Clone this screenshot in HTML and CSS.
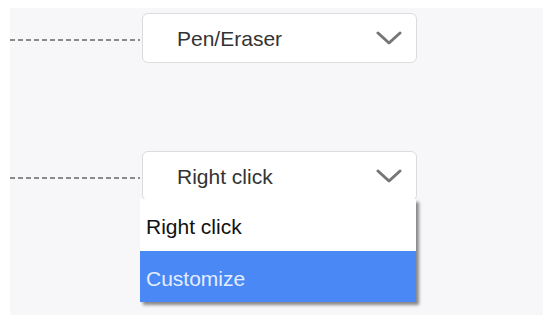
FILE: index.html
```html
<!DOCTYPE html>
<html lang="en">
<head>
    <meta charset="UTF-8">
    <meta name="viewport" content="width=device-width, initial-scale=1.0">
    <title>Button settings</title>
    <link rel="stylesheet" href="styles.css">
</head>
<body>
    <div class="panel">
        <div class="row">
            <div class="dash"></div>
            <div class="select">
                <span class="value">Pen/Eraser</span>
                <svg class="chevron" width="26" height="14" viewBox="0 0 26 14">
                    <polyline points="2,2 13,12 24,2" fill="none" stroke="#767676" stroke-width="3" stroke-linecap="round" stroke-linejoin="round"/>
                </svg>
            </div>
        </div>
        <div class="row">
            <div class="dash"></div>
            <div class="select open">
                <span class="value">Right click</span>
                <svg class="chevron" width="26" height="14" viewBox="0 0 26 14">
                    <polyline points="2,2 13,12 24,2" fill="none" stroke="#767676" stroke-width="3" stroke-linecap="round" stroke-linejoin="round"/>
                </svg>
                <ul class="menu">
                    <li class="item">Right click</li>
                    <li class="item active">Customize</li>
                </ul>
            </div>
        </div>
    </div>
</body>
</html>
```

FILE: styles.css
```css
body {
    margin: 0;
    background-color: #ffffff;
    font-family: "Liberation Sans", Arial, sans-serif;
}
.panel {
    margin: 8px 7px 0 10px;
    height: 307px;
    padding-top: 5px;
    box-sizing: border-box;
    background-color: #f7f7f9;
    display: flex;
    flex-direction: column;
    gap: 88px;
}
.row {
    display: flex;
    align-items: center;
}
.dash {
    width: 130px;
    height: 2px;
    margin-right: 2px;
    margin-top: 4px;
    background: repeating-linear-gradient(to right, #8a8a8a 0 5px, transparent 5px 8px);
}
.select {
    position: relative;
    width: 275px;
    height: 50px;
    box-sizing: border-box;
    padding: 0 14px 0 34px;
    display: flex;
    align-items: center;
    justify-content: space-between;
    background-color: #ffffff;
    border: 1px solid #dcdcdc;
    border-radius: 6px;
}
.value {
    font-size: 21px;
    color: #333333;
    padding-top: 2px;
}
.chevron {
    display: block;
}
.menu {
    position: absolute;
    left: -3px;
    top: calc(100% - 1px);
    width: 276px;
    margin: 0;
    padding: 0;
    list-style: none;
    background-color: #ffffff;
    box-shadow: 3px 3px 3px rgba(0, 0, 0, 0.45);
}
.item {
    height: 52px;
    padding-left: 6px;
    padding-top: 4px;
    box-sizing: border-box;
    display: flex;
    align-items: center;
    font-size: 21px;
    color: #111111;
}
.item.active {
    height: 51px;
    background-color: #4a88f5;
    color: #e3edff;
}
```
